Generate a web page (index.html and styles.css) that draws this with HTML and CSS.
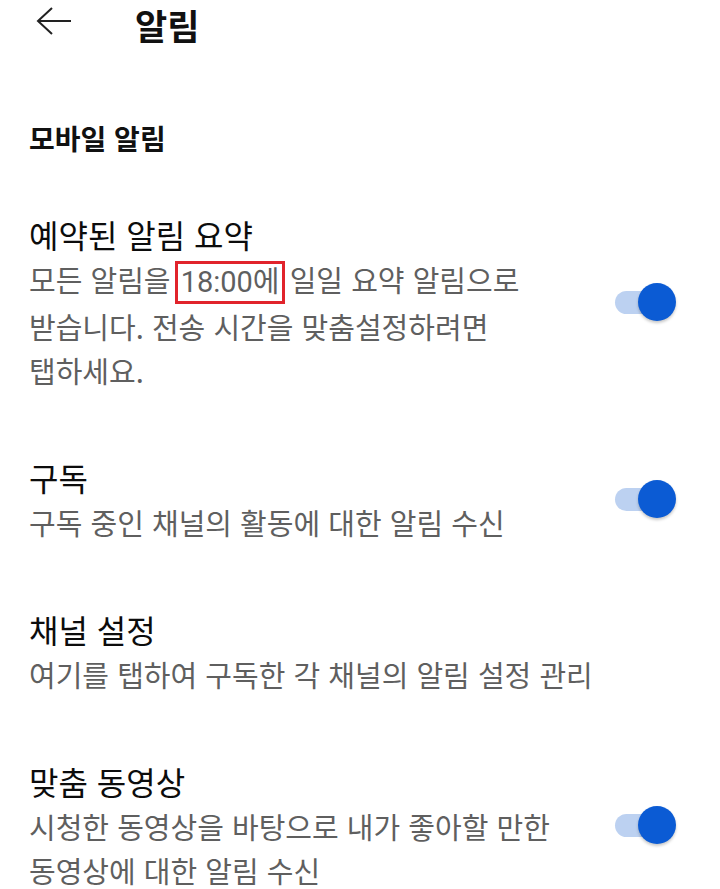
FILE: index.html
```html
<!DOCTYPE html>
<html lang="ko">
<head>
<meta charset="UTF-8">
<meta name="viewport" content="width=device-width, initial-scale=1.0">
<title>알림</title>
<link rel="stylesheet" href="styles.css">
</head>
<body>
<div class="topbar">
    <span class="back">
        <svg width="36" height="32" viewBox="0 0 36 32">
            <path d="M35 14H2M16 1L2 14l14 13" fill="none" stroke="#222" stroke-width="2"/>
        </svg>
    </span>
    <div class="page-title">알림</div>
</div>

<div class="section-title">모바일 알림</div>

<div class="list">
    <div class="item">
        <div class="text">
            <div class="item-title">예약된 알림 요약</div>
            <div class="item-desc">모든 알림을 <span class="mark">18:00에</span> 일일 요약 알림으로 받습니다. 전송 시간을 맞춤설정하려면 탭하세요.</div>
        </div>
        <div class="toggle on"><span class="track"></span><span class="thumb"></span></div>
    </div>

    <div class="item">
        <div class="text">
            <div class="item-title">구독</div>
            <div class="item-desc">구독 중인 채널의 활동에 대한 알림 수신</div>
        </div>
        <div class="toggle on"><span class="track"></span><span class="thumb"></span></div>
    </div>

    <div class="item">
        <div class="text">
            <div class="item-title">채널 설정</div>
            <div class="item-desc">여기를 탭하여 구독한 각 채널의 알림 설정 관리</div>
        </div>
    </div>

    <div class="item">
        <div class="text">
            <div class="item-title">맞춤 동영상</div>
            <div class="item-desc">시청한 동영상을 바탕으로 내가 좋아할 만한 동영상에 대한 알림 수신</div>
        </div>
        <div class="toggle on"><span class="track"></span><span class="thumb"></span></div>
    </div>
</div>
</body>
</html>
```

FILE: styles.css
```css
body {
    font-family: "Noto Sans CJK KR", "Noto Sans", sans-serif;
    margin: 0;
    padding: 0;
    background: #fff;
    color: #111;
    overflow: hidden;
}

.topbar {
    height: 50px;
    display: flex;
    align-items: center;
    padding-left: 36px;
}

.back {
    display: flex;
    width: 36px;
    height: 32px;
    margin-top: -4px;
}

.page-title {
    margin-left: 63px;
    font-size: 35px;
    font-weight: bold;
    line-height: 50px;
}

.section-title {
    margin: 70px 0 0 29px;
    font-size: 28px;
    font-weight: bold;
    line-height: 36px;
}

.list {
    margin-top: 24px;
}

.item {
    display: flex;
    align-items: center;
    padding: 31px 44px 31px 29px;
}

.text {
    flex: 1;
    min-width: 0;
}

.item-title {
    font-size: 32px;
    line-height: 46px;
    color: #0c0c0c;
}

.item-desc {
    font-size: 29px;
    line-height: 44px;
    color: #5f5f5f;
    word-break: keep-all;
}

.mark {
    display: inline-block;
    font-family: Roboto, "Noto Sans CJK KR", sans-serif;
    border: 3px solid #e1232b;
    line-height: 37px;
    padding: 0 2px 0 3px;
    margin: 0 -3px 0 -4px;
}

.toggle {
    position: relative;
    flex: none;
    width: 61px;
    height: 38px;
    margin-left: 35px;
}

.track {
    position: absolute;
    left: 0;
    top: 8px;
    width: 50px;
    height: 23px;
    border-radius: 12px;
    background: #bcd1f1;
}

.thumb {
    position: absolute;
    right: 0;
    top: 0;
    width: 38px;
    height: 38px;
    border-radius: 50%;
    background: #0b5bd4;
    box-shadow: 0 2px 3px rgba(0, 0, 0, 0.22);
}
```
